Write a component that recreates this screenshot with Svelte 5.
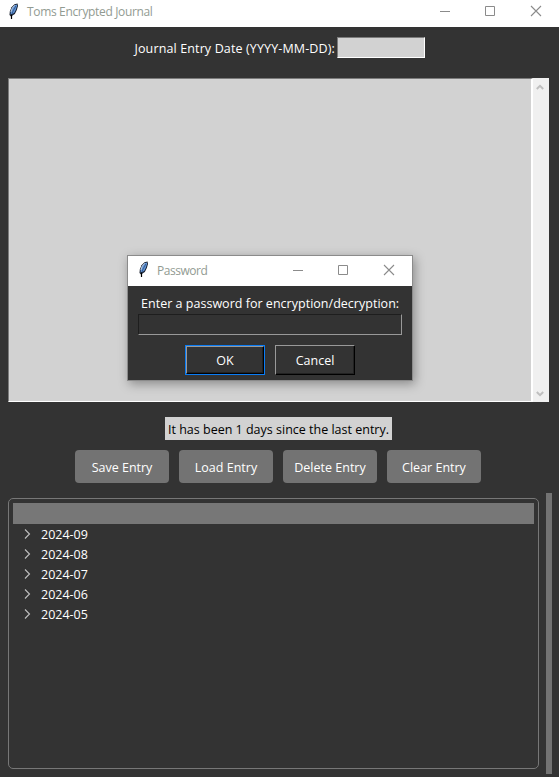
<script>
  const months = ['2024-09', '2024-08', '2024-07', '2024-06', '2024-05'];
  const actions = ['Save Entry', 'Load Entry', 'Delete Entry', 'Clear Entry'];
</script>

{#snippet feather()}
  <svg class="feather" width="12" height="17" viewBox="0 0 12 17">
    <path d="M9.500 .5 6.500 1.200 3.500 4.200 1.800 8.500 1.500 12 3 13.500 6.800 11 8.800 7 10 3Z" fill="#161d2b" />
    <path d="M9 1.400 6.500 2.200 4.200 4.800 2.700 8.500 2.600 11.800 6.200 10 8 6.500 9.100 3Z" fill="#5f93d6" />
    <path d="M6.800 2.300 4.200 5.200 2.900 9" fill="none" stroke="#c9d6e6" stroke-width=".9" />
    <path d="M7.800 3 5 8 3.500 13" fill="none" stroke="#2d4f80" stroke-width=".8" />
    <path d="M3.500 11.500V16" fill="none" stroke="#000" stroke-width="1.200" />
  </svg>
{/snippet}

{#snippet controls()}
  <svg class="controls" width="104" height="12" viewBox="0 0 104 12" fill="none" stroke="#8b8b8b">
    <path d="M1 6.500H11" />
    <path d="M46.500 1.500H55.500V10.500H46.500Z" />
    <path d="M92 1L102 11M102 1L92 11" stroke-width="1.100" />
  </svg>
{/snippet}

<main>
  <header class="titlebar">
    {@render feather()}
    <span class="title">Toms Encrypted Journal</span>
    {@render controls()}
  </header>

  <div class="date">
    <span class="date-label">Journal Entry Date (YYYY-MM-DD):</span>
    <div class="date-field"></div>
  </div>

  <div class="editor">
    <div class="paper"></div>
    <div class="scroll">
      <svg width="8" height="6" viewBox="0 0 8 6"><path d="M.8 5 4 1.800 7.200 5" fill="none" stroke="#bfbfbf" stroke-width="2" /></svg>
      <svg width="8" height="6" viewBox="0 0 8 6"><path d="M.8 1 4 4.200 7.200 1" fill="none" stroke="#bfbfbf" stroke-width="2" /></svg>
    </div>
  </div>

  <div class="status"><span>It has been 1 days since the last entry.</span></div>

  <div class="actions">
    {#each actions as action}
      <button>{action}</button>
    {/each}
  </div>

  <div class="history">
    <div class="tree">
      <div class="tree-head"></div>
      {#each months as month}
        <div class="row">
          <svg width="7" height="10" viewBox="0 0 7 10"><path d="M1 .5 5.500 5 1 9.500" fill="none" stroke="#c0c0c0" stroke-width="1.100" /></svg>
          <span>{month}</span>
        </div>
      {/each}
    </div>
    <div class="thumb"></div>
  </div>

  <section class="dialog">
    <header class="titlebar small">
      {@render feather()}
      <span class="title">Password</span>
      {@render controls()}
    </header>
    <div class="prompt">Enter a password for encryption/decryption:</div>
    <div class="secret"></div>
    <div class="choices">
      <div class="choice default"><button>OK</button></div>
      <div class="choice"><button>Cancel</button></div>
    </div>
  </section>
</main>

<style>
  :global(body) { margin: 0; background: #333; }
  main {
    position: relative;
    box-sizing: border-box;
    width: 559px;
    height: 777px;
    overflow: hidden;
    display: flex;
    flex-direction: column;
    background: #333;
    color: #fff;
    font: 12.5px/20px "Open Sans", "Noto Sans", sans-serif;
    white-space: nowrap;
  }
  button { font: inherit; color: inherit; padding: 0; border: 0; }
  .titlebar {
    box-sizing: border-box;
    flex: none;
    display: flex;
    align-items: flex-start;
    height: 27px;
    padding: 2px 16px 0 8px;
    background: #fff;
    color: #929b92;
    font-size: 12px;
  }
  .feather { margin-top: 1px; }
  .title { margin-left: 7px; letter-spacing: -0.34px; }
  .controls { margin: 3px 0 0 auto; }
  .date { display: flex; justify-content: flex-end; height: 21px; margin: 10px 134px 20px 0; }
  .date-label { margin-right: 2px; line-height: 24px; letter-spacing: 0.13px; }
  .date-field {
    box-sizing: border-box;
    width: 88px;
    height: 21px;
    background: #d2d2d2;
    border: 1px solid;
    border-color: #7b7b7b #fff #fff #7b7b7b;
  }
  .editor { display: flex; height: 324px; margin: 0 10px 0 8px; }
  .paper {
    flex: 1;
    background: #d2d2d2;
    border: 1px solid;
    border-color: #7b7b7b #fff #fff #7b7b7b;
    border-right-width: 2px;
  }
  .scroll {
    box-sizing: border-box;
    width: 16px;
    padding: 6px 4px 5px 3px;
    display: flex;
    flex-direction: column;
    justify-content: space-between;
    background: #f0f0f0;
  }
  .status {
    width: 227px;
    height: 23px;
    margin: 15px 0 10px 165px;
    background: #d2d2d2;
    color: #000;
    text-align: center;
    line-height: 26px;
  }
  .actions { display: flex; gap: 10px; padding-left: 75px; }
  .actions button {
    box-sizing: border-box;
    width: 94px;
    height: 33px;
    padding-top: 2px;
    border-radius: 4px;
    background: #737373;
    line-height: 31px;
  }
  .history { display: flex; gap: 7px; margin: 10px 0 0 8px; }
  .tree {
    box-sizing: border-box;
    width: 531px;
    height: 271px;
    margin-top: 5px;
    padding: 4px;
    border: 1px solid #777;
    border-radius: 5px;
  }
  .tree-head { height: 21px; background: #777; }
  .row { display: flex; align-items: center; height: 20px; padding-left: 11px; gap: 10px; }
  .row span { padding-top: 2px; }
  .thumb { width: 6px; height: 281px; background: #737373; }
  .dialog {
    position: absolute;
    left: 127px;
    top: 255px;
    box-sizing: border-box;
    width: 286px;
    height: 126px;
    border: 1px solid #8b8b8b;
    background: #333;
    box-shadow: 2px 3px 10px rgba(0, 0, 0, 0.34);
  }
  .small { height: 30px; padding: 5px 16px 0 10px; }
  .small .feather { margin-top: 0; }
  .small .title { letter-spacing: -0.48px; }
  .prompt { margin: 8px 0 0 13px; height: 20px; letter-spacing: 0.02px; }
  .secret {
    box-sizing: border-box;
    width: 264px;
    height: 21px;
    margin-left: 10px;
    border: 1px solid;
    border-color: #1e1e1e #999 #999 #1e1e1e;
  }
  .choices { display: flex; gap: 10px; margin: 10px 0 0 57px; }
  .choice { box-sizing: border-box; width: 80px; height: 30px; }
  .choice button {
    box-sizing: border-box;
    display: block;
    width: 100%;
    height: 100%;
    padding-top: 2px;
    border: 1px solid;
    border-color: #999 #000 #000 #999;
    background: #333;
    box-shadow: inset -1px -1px #222;
  }
  .default { border: 1px solid #0a7cf5; }
</style>
